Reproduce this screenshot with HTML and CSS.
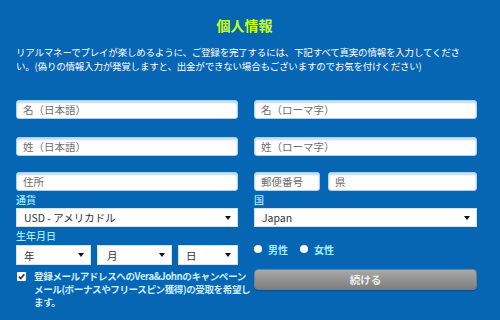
FILE: index.html
```html
<!DOCTYPE html>
<html lang="ja">
<head>
<meta charset="utf-8">
<link rel="stylesheet" href="styles.css">
</head>
<body>
<div class="page">
  <h1 class="title">個人情報</h1>
  <p class="intro">リアルマネーでプレイが楽しめるように、ご登録を完了するには、下記すべて真実の情報を入力してください。(偽りの情報入力が発覚しますと、出金ができない場合もございますのでお気を付けください)</p>
  <div class="form">
    <div class="col">
      <input class="field" placeholder="名（日本語）">
      <input class="field gap2" placeholder="姓（日本語）">
      <input class="field gap3" placeholder="住所">
      <div class="label">通貨</div>
      <div class="select"><span>USD - アメリカドル</span></div>
      <div class="label label2">生年月日</div>
      <div class="dates">
        <div class="select year"><span>年</span></div>
        <div class="select month"><span>月</span></div>
        <div class="select day"><span>日</span></div>
      </div>
      <div class="consent">
        <span class="check"><svg width="9" height="9" viewBox="0 0 9 9"><path d="M1.8 4.6 L3.8 6.6 L7.3 2.2" fill="none" stroke="#1d3a6b" stroke-width="1.7"/></svg></span>
        <p><span class="ln">登録メールアドレスへのVera&amp;Johnのキャンペーン</span><span class="ln">メール(ボーナスやフリースピン獲得)の受取を希望し</span><span class="ln">ます。</span></p>
      </div>
    </div>
    <div class="col">
      <input class="field" placeholder="名（ローマ字）">
      <input class="field gap2" placeholder="姓（ローマ字）">
      <div class="pair gap3">
        <input class="field zip" placeholder="郵便番号">
        <input class="field pref" placeholder="県">
      </div>
      <div class="label">国</div>
      <div class="select"><span>Japan</span></div>
      <div class="radios">
        <span class="radio"><span class="dot"></span>男性</span>
        <span class="radio"><span class="dot"></span>女性</span>
      </div>
      <button class="btn">続ける</button>
    </div>
  </div>
</div>
</body>
</html>
```
FILE: styles.css
```css
* { box-sizing: border-box; }
html, body { margin: 0; height: 100%; }
body {
  background: #0766b4;
  font-family: "Noto Sans CJK JP", "Noto Sans", sans-serif;
  overflow: hidden;
}
.page { padding: 15px 23px 0 16px; width: 500px; }
.title {
  margin: 0;
  text-align: center;
  font-size: 14px;
  line-height: 20px;
  font-weight: 700;
  color: #c8ff1a;
  padding-right: 4px;
}
.intro {
  margin: 10px 0 0;
  width: 452px;
  font-size: 9.5px;
  letter-spacing: -0.2px;
  line-height: 14px;
  color: #fff;
}
.form {
  margin-top: 27px;
  display: grid;
  grid-template-columns: 222px 223px;
  column-gap: 16px;
}
.col { display: flex; flex-direction: column; }
.field {
  display: block;
  width: 100%;
  height: 19px;
  margin: 0;
  border: 1px solid #a9d3ef;
  border-radius: 3px;
  background: #fff;
  box-shadow: inset 0 2px 2px rgba(40, 120, 190, 0.28);
  padding: 0 6px;
  font-family: inherit;
  font-size: 10.5px;
  color: #555;
  outline: none;
}
.field::placeholder { color: #6e6e6e; }
.gap2 { margin-top: 18px; }
.gap3 { margin-top: 16px; }
.pair { display: flex; gap: 8px; }
.pair .zip { width: 66px; flex: none; }
.pair .pref { flex: 1; width: auto; }
.label {
  height: 17px;
  line-height: 18px;
  font-size: 10px;
  font-weight: 500;
  color: #a6ecf8;
}
.label2 { height: 18px; line-height: 18px; }
.select {
  position: relative;
  height: 19px;
  background: #fff;
  border: 1px solid #cfe4f3;
  display: flex;
  align-items: center;
  padding-left: 7px;
  font-size: 10.5px;
  color: #333;
}
.select::after {
  content: "";
  position: absolute;
  right: 6px;
  top: 7px;
  border-left: 3px solid transparent;
  border-right: 3px solid transparent;
  border-top: 4px solid #111;
}
.dates { display: flex; gap: 6px; }
.dates .select { height: 20px; }
.year { width: 75px; }
.month { width: 75px; padding-left: 9px; }
.day { flex: 1; }
.consent {
  display: flex;
  margin-top: 5px;
  gap: 8px;
}
.check {
  flex: none;
  width: 9px;
  height: 9px;
  margin: 2px 0 0 1px;
  background: #fff;
  border-radius: 1px;
  display: flex;
}
.consent p {
  margin: 0;
  font-size: 9.6px;
  letter-spacing: -0.45px;
  line-height: 13px;
  font-weight: 700;
  color: #cdeeff;
}
.ln { display: block; white-space: nowrap; }
.radios {
  margin-top: 13px;
  height: 18px;
  display: flex;
  align-items: center;
  gap: 12px;
}
.radio {
  display: flex;
  align-items: center;
  gap: 6px;
  font-size: 10px;
  font-weight: 700;
  color: #a6ecf8;
}
.dot {
  width: 8px;
  height: 8px;
  border-radius: 50%;
  background: #fff;
}
.btn {
  margin-top: 11px;
  height: 21px;
  width: 100%;
  border: 1px solid #6d7f93;
  border-radius: 4px;
  background: linear-gradient(#a9a9a9, #7e7e7e);
  box-shadow: 0 1px 1px rgba(0, 0, 0, 0.25);
  color: #eee;
  font-family: inherit;
  font-size: 10.5px;
  font-weight: 700;
  padding: 0;
}
```
